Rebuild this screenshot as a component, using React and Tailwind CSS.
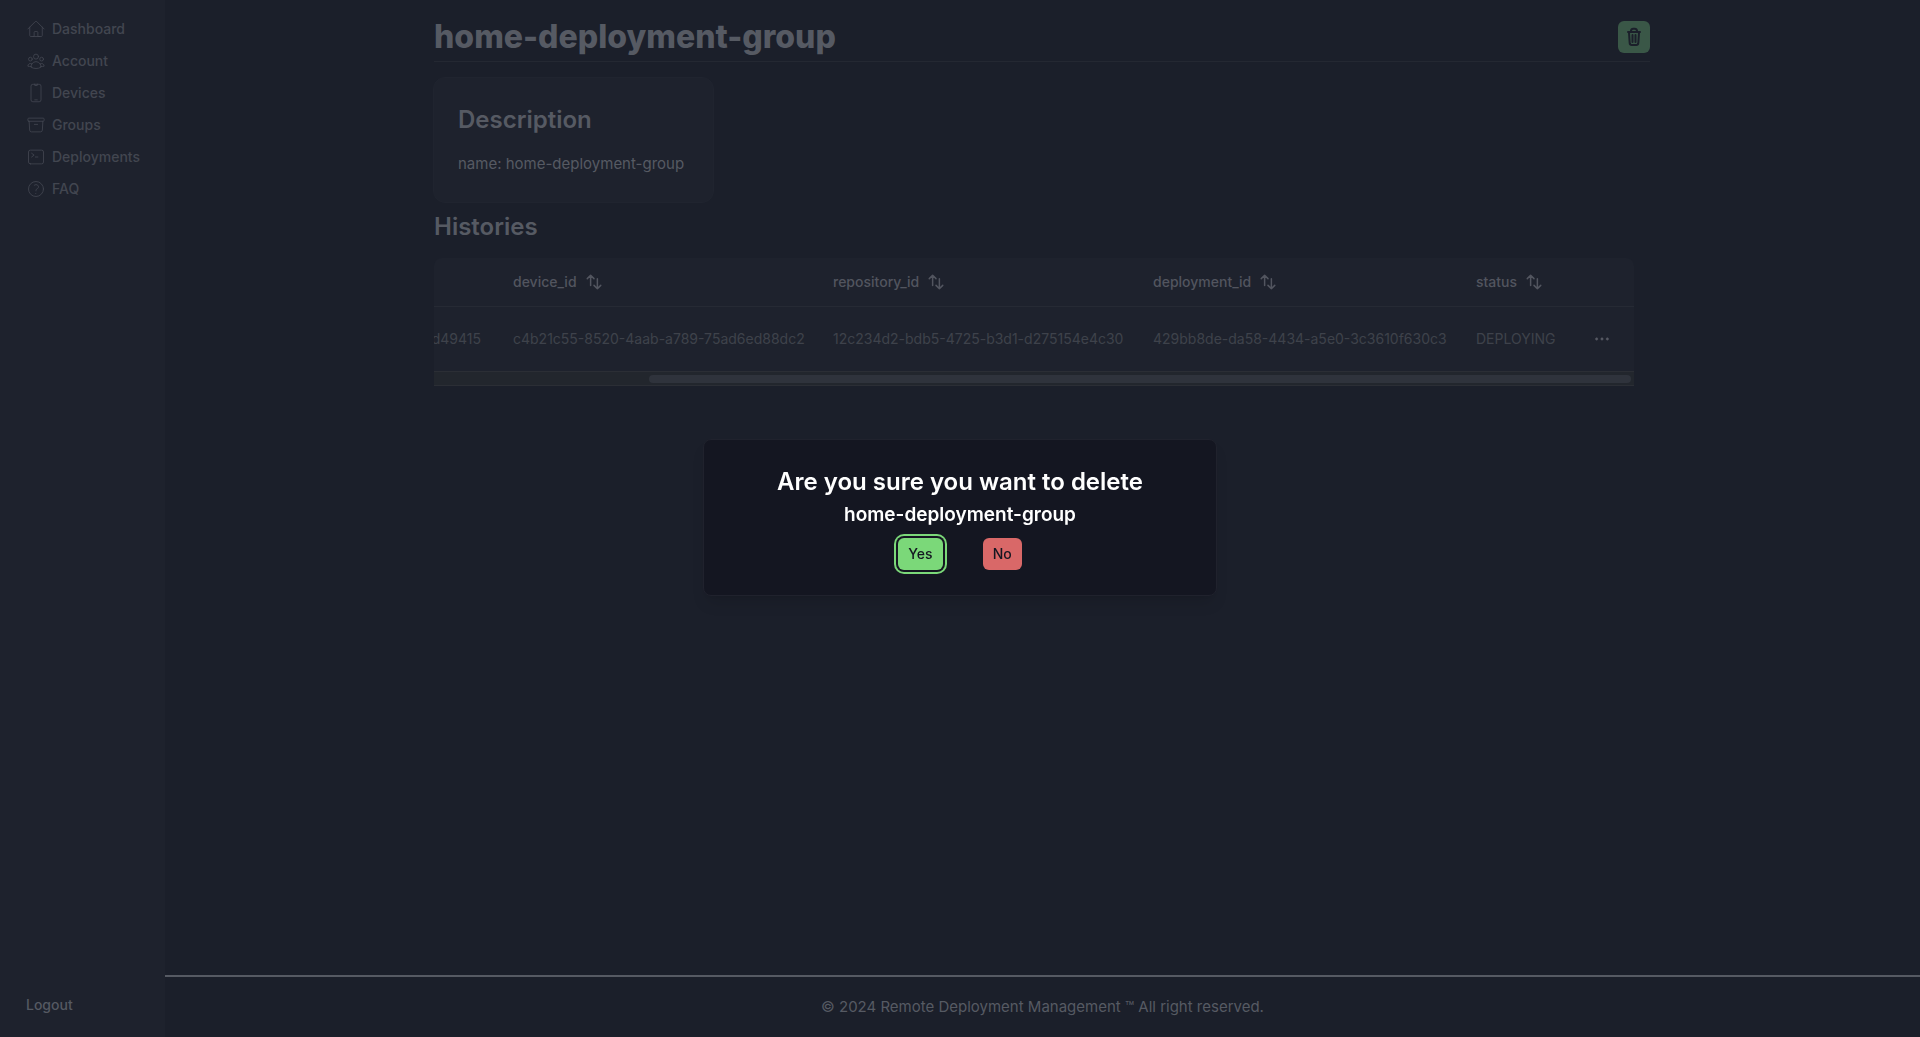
import React from "react";
import {
  HiOutlineHome,
  HiOutlineUserGroup,
  HiOutlineDevicePhoneMobile,
  HiOutlineArchiveBox,
  HiOutlineCommandLine,
  HiOutlineQuestionMarkCircle,
  HiOutlineArrowsUpDown,
} from "react-icons/hi2";
import { RxDotsHorizontal } from "react-icons/rx";

const links = [
  ["Dashboard", HiOutlineHome],
  ["Account", HiOutlineUserGroup],
  ["Devices", HiOutlineDevicePhoneMobile],
  ["Groups", HiOutlineArchiveBox],
  ["Deployments", HiOutlineCommandLine],
  ["FAQ", HiOutlineQuestionMarkCircle],
];

const columns = [
  ["device_id", "w-[320px]"],
  ["repository_id", "w-[320px]"],
  ["deployment_id", "w-[323px]"],
  ["status", "w-[110px]"],
];

function Sidebar() {
  return (
    <aside className="flex w-[165px] shrink-0 flex-col justify-between bg-[#1e222d] px-[26px] pt-[13px] pb-4 text-sm font-medium">
      <nav className="flex flex-col text-[#424650]">
        {links.map(([label, Icon]) => (
          <a key={label} href="#" className="flex h-8 items-center gap-1.5 whitespace-nowrap">
            <Icon strokeWidth={1} className="size-5 shrink-0" />
            {label}
          </a>
        ))}
      </nav>
      <button className="flex h-8 items-center self-start text-[#555962]">Logout</button>
    </aside>
  );
}

function TrashIcon() {
  return (
    <svg viewBox="0 0 16 20" className="h-5 w-4" fill="none" stroke="currentColor" strokeWidth="2" strokeLinecap="round" strokeLinejoin="round">
      <path d="M2 5h12M5 4.5V3.8A2.3 2.3 0 0 1 7.3 1.7h1.4A2.3 2.3 0 0 1 11 3.8v.7M3 5.5l.7 10.7A2 2 0 0 0 5.7 18h4.6a2 2 0 0 0 2-1.8L13 5.5M6.500 8v7M9.500 8v7" />
    </svg>
  );
}

function Histories() {
  return (
    <div className="mt-[15px] overflow-hidden rounded-t-lg bg-[#1e222d]">
      <table className="w-full table-fixed text-left text-sm">
        <thead className="text-[#52555f]">
          <tr className="h-12 border-b border-[#262a34]">
            <th />
            {columns.map(([name, width]) => (
              <th key={name} className={width + " font-medium"}>
                <button className="flex items-center gap-2">
                  {name}
                  <HiOutlineArrowsUpDown className="size-[18px]" strokeWidth={2} />
                </button>
              </th>
            ))}
            <th className="w-12" />
          </tr>
        </thead>
        <tbody className="text-[#3e424b]">
          <tr className="h-[65px]">
            <td>
              <div className="flex justify-end pr-8">d49415</div>
            </td>
            <td>c4b21c55-8520-4aab-a789-75ad6ed88dc2</td>
            <td>12c234d2-bdb5-4725-b3d1-d275154e4c30</td>
            <td>429bb8de-da58-4434-a5e0-3c3610f630c3</td>
            <td>DEPLOYING</td>
            <td>
              <button aria-label="Row actions" className="ml-2 flex text-[#565963]">
                <RxDotsHorizontal className="size-4" strokeWidth={0.5} stroke="currentColor" />
              </button>
            </td>
          </tr>
        </tbody>
      </table>
      <div className="flex h-[15px] items-center justify-end border-y border-[#2b2e35] bg-[#22262d] pr-[3px]">
        <div className="h-2 w-[82%] rounded-full bg-[#2f333c]" />
      </div>
    </div>
  );
}

function ConfirmDialog() {
  return (
    <div className="fixed inset-0 flex items-center justify-center pb-0.5">
      <div role="dialog" aria-modal="true" aria-labelledby="confirm-title" className="flex w-full max-w-[514px] flex-col items-center rounded-lg border border-[#20222d] bg-[#141621] px-6 pt-[26px] pb-[25px] text-white shadow-lg">
        <h2 id="confirm-title" className="text-2xl font-semibold">Are you sure you want to delete</h2>
        <p className="mt-[3px] text-[19px] leading-7 font-semibold">home-deployment-group</p>
        <div className="mt-[9px] flex gap-10 text-sm font-medium text-[#141621]">
          <button className="h-8 rounded-md bg-[#7bd879] px-2.5 ring-2 ring-[#7bd879] ring-offset-2 ring-offset-[#141621]">Yes</button>
          <button className="h-8 rounded-md bg-[#d96868] px-2.5">No</button>
        </div>
      </div>
    </div>
  );
}

export default function App() {
  return (
    <div className="flex min-h-screen bg-[#1b1f2a] font-['Inter',sans-serif] text-[#565a63]">
      <Sidebar />
      <div className="flex min-w-0 grow flex-col">
        <main className="mx-auto w-full max-w-[1217px] grow pt-[17px] pr-px">
          <header className="flex items-center justify-between border-b border-[#242832] pb-1">
            <h1 className="text-[32px] leading-10 font-extrabold">home-deployment-group</h1>
            <button aria-label="Delete group" className="flex size-8 items-center justify-center rounded-md bg-[#3a5747] text-[#1b1f2a]">
              <TrashIcon />
            </button>
          </header>
          <section className="mt-[15px] -ml-px w-fit min-w-[281px] rounded-xl border border-[#20242f] bg-[#1e222d] px-6 py-[26px]">
            <h2 className="text-2xl font-semibold">Description</h2>
            <p className="mt-4 text-[15px] leading-6">name: home-deployment-group</p>
          </section>
          <section className="mt-2 mr-4">
            <h2 className="text-2xl font-semibold">Histories</h2>
            <Histories />
          </section>
        </main>
        <footer className="flex h-[62px] items-center justify-center border-t-2 border-[#565a63] text-[15px]">
          © 2024 Remote Deployment Management ™ All right reserved.
        </footer>
      </div>
      <ConfirmDialog />
    </div>
  );
}
